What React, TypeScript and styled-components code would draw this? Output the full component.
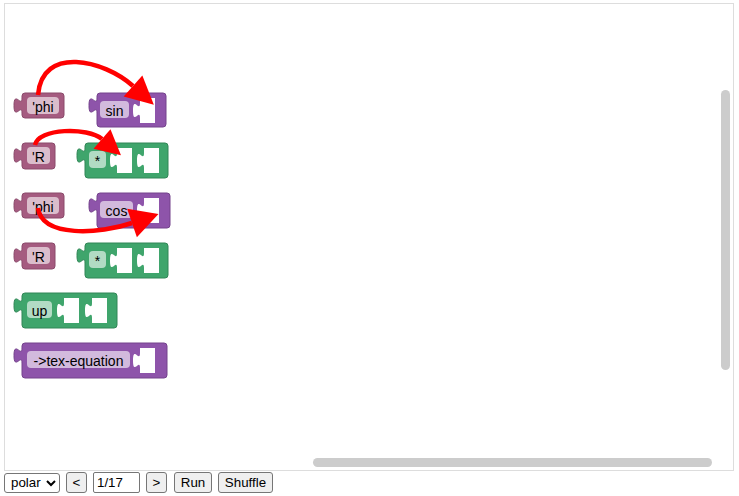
import React from "react";
import styled, { createGlobalStyle } from "styled-components";

const GlobalStyle = createGlobalStyle`
  html, body { margin: 0; padding: 0; background: #ffffff; }
  body { font-family: "Liberation Sans", Arial, sans-serif; }
`;

// workspace inner origin in page coordinates
const OX = 5;
const OY = 4;

const Page = styled.div`
  padding: 3px 0 0 4px;
`;

const Workspace = styled.div`
  position: relative;
  box-sizing: border-box;
  width: 730px;
  height: 468px;
  border: 1px solid #dddddd;
  background: #ffffff;
  overflow: hidden;
`;

const VScroll = styled.div`
  position: absolute;
  left: ${721 - OX}px;
  top: ${90 - OY}px;
  width: 9px;
  height: 280px;
  border-radius: 5px;
  background: #cccccc;
`;

const HScroll = styled.div`
  position: absolute;
  left: ${313 - OX}px;
  top: ${458 - OY}px;
  width: 399px;
  height: 9px;
  border-radius: 5px;
  background: #cccccc;
`;

const BlockSvg = styled.svg.attrs<{ $x: number; $y: number }>((p) => ({
  style: { left: p.$x, top: p.$y },
}))<{ $x: number; $y: number }>`
  position: absolute;
  overflow: visible;
`;

const Overlay = styled.svg`
  position: absolute;
  left: 0;
  top: 0;
  width: 100%;
  height: 100%;
  pointer-events: none;
`;

const Label = styled.text`
  font-family: "Liberation Sans", Arial, sans-serif;
  font-size: 14px;
  fill: #000000;
`;

const Controls = styled.div`
  display: flex;
  align-items: center;
  gap: 6px;
  margin-top: 1px;
  height: 21px;
`;

const Select = styled.select`
  box-sizing: border-box;
  width: 56px;
  height: 20px;
  font: 13.33px "Liberation Sans", Arial, sans-serif;
  color: #000;
  background: #fff;
  border: 1px solid #767676;
  border-radius: 3px;
  padding: 0 0 0 2px;
`;

const Button = styled.button<{ $w: number; $ml?: number }>`
  box-sizing: border-box;
  width: ${(p) => p.$w}px;
  margin-left: ${(p) => p.$ml ?? 0}px;
  height: 21px;
  padding: 1px 0;
  text-align: center;
  font: 13.33px "Liberation Sans", Arial, sans-serif;
  color: #000;
  background: #efefef;
  border: 1px solid #767676;
  border-radius: 3px;
`;

const PageInput = styled.input`
  box-sizing: border-box;
  width: 47px;
  height: 21px;
  padding: 1px 3px;
  font: 13.33px "Liberation Sans", Arial, sans-serif;
  color: #000;
  border: 1px solid #767676;
  border-radius: 2px;
`;

type Kind = "pink" | "purple" | "green";

const COLORS: Record<Kind, { fill: string; dark: string }> = {
  pink: { fill: "#a55b80", dark: "#8b4a6b" },
  purple: { fill: "#8e54aa", dark: "#74428c" },
  green: { fill: "#3fa56c", dark: "#318656" },
};

interface BlockDef {
  x: number;
  y: number;
  w: number;
  h: number;
  kind: Kind;
  label: string;
  pillX: number;
  pillW: number;
  slots: number[];
}

const BLOCKS: BlockDef[] = [
  { x: 22, y: 93, w: 42, h: 25, kind: "pink", label: "'phi", pillX: 27, pillW: 32, slots: [] },
  { x: 97, y: 93, w: 69, h: 34, kind: "purple", label: "sin", pillX: 100, pillW: 29, slots: [133] },
  { x: 22, y: 143, w: 33, h: 26, kind: "pink", label: "'R", pillX: 27, pillW: 23, slots: [] },
  { x: 85, y: 143, w: 83, h: 35, kind: "green", label: "*", pillX: 89, pillW: 17, slots: [110, 137] },
  { x: 22, y: 193, w: 42, h: 25, kind: "pink", label: "'phi", pillX: 27, pillW: 32, slots: [] },
  { x: 97, y: 193, w: 73, h: 35, kind: "purple", label: "cos", pillX: 100, pillW: 33, slots: [137] },
  { x: 22, y: 243, w: 33, h: 26, kind: "pink", label: "'R", pillX: 27, pillW: 23, slots: [] },
  { x: 85, y: 243, w: 83, h: 35, kind: "green", label: "*", pillX: 89, pillW: 17, slots: [110, 137] },
  { x: 22, y: 293, w: 95, h: 35, kind: "green", label: "up", pillX: 27, pillW: 25, slots: [57, 85] },
  { x: 22, y: 343, w: 145, h: 35, kind: "purple", label: "->tex-equation", pillX: 27, pillW: 103, slots: [133] },
];

const TAB = 8;

function bodyPath(w: number, h: number) {
  const r = 3;
  const L = TAB;
  return [
    `M ${L + r},0`,
    `H ${L + w - r}`,
    `Q ${L + w},0 ${L + w},${r}`,
    `V ${h - r}`,
    `Q ${L + w},${h} ${L + w - r},${h}`,
    `H ${L + r}`,
    `Q ${L},${h} ${L},${h - r}`,
    `V 20`,
    `c 0,-10 -8,8 -8,-7.5 s 8,2.5 8,-7.5`,
    `V ${r}`,
    `Q ${L},0 ${L + r},0 Z`,
  ].join(" ");
}

function slotPath(sx: number, sy: number, sh: number) {
  const k = 7;
  return [
    `M ${sx + k},${sy}`,
    `H ${sx + 22}`,
    `V ${sy + sh}`,
    `H ${sx + k}`,
    `V ${sy + 20}`,
    `c 0,-10 -${k},8 -${k},-7.5 s ${k},2.5 ${k},-7.5 Z`,
  ].join(" ");
}

const Block: React.FC<{ def: BlockDef }> = ({ def }) => {
  const c = COLORS[def.kind];
  const tall = def.h > 30;
  const pillY = tall ? 8 : 4;
  const px = def.pillX - def.x + TAB;
  return (
    <BlockSvg
      $x={def.x - TAB - OX}
      $y={def.y - OY}
      width={def.w + TAB + 1}
      height={def.h + 1}
      viewBox={`0 0 ${def.w + TAB + 1} ${def.h + 1}`}
    >
      <path d={bodyPath(def.w, def.h)} fill={c.fill} stroke={c.dark} strokeWidth={1} />
      <rect x={px} y={pillY} width={def.pillW} height={17} rx={4} fill="rgba(255,255,255,0.6)" />
      <Label x={px + def.pillW / 2} y={pillY + 9.5} textAnchor="middle" dominantBaseline="central">
        {def.label}
      </Label>
      {def.slots.map((s, i) => (
        <path key={i} d={slotPath(s - def.x + TAB, 5, 25)} fill="#ffffff" />
      ))}
    </BlockSvg>
  );
};

type P = [number, number];

function makeArrow(p0: P, c1: P, c2: P, p3: P, L = 24, W = 24) {
  const loc = (p: P): P => [p[0] - OX, p[1] - OY];
  const [a, b, cc, d] = [loc(p0), loc(c1), loc(c2), loc(p3)];
  const dx = d[0] - cc[0];
  const dy = d[1] - cc[1];
  const len = Math.hypot(dx, dy);
  const ux = dx / len;
  const uy = dy / len;
  const tip: P = [d[0] + ux * L, d[1] + uy * L];
  const b1: P = [d[0] - uy * (W / 2), d[1] + ux * (W / 2)];
  const b2: P = [d[0] + uy * (W / 2), d[1] - ux * (W / 2)];
  return {
    line: `M ${a[0]},${a[1]} C ${b[0]},${b[1]} ${cc[0]},${cc[1]} ${d[0]},${d[1]}`,
    head: `${tip[0]},${tip[1]} ${b1[0]},${b1[1]} ${b2[0]},${b2[1]}`,
  };
}

const ARROWS = [
  makeArrow([38, 95], [42, 45], [104, 60], [133, 86], 28, 28),
  makeArrow([35, 145], [38, 128], [88, 127], [102, 139], 25, 26),
  makeArrow([38, 208], [42, 238], [100, 234], [132, 223], 28, 30),
];

export default function App() {
  return (
    <Page>
      <GlobalStyle />
      <Workspace>
        {BLOCKS.map((b, i) => (
          <Block key={i} def={b} />
        ))}
        <Overlay>
          {ARROWS.map((a, i) => (
            <g key={i}>
              <path d={a.line} fill="none" stroke="#ff0000" strokeWidth={4.5} />
              <polygon points={a.head} fill="#ff0000" />
            </g>
          ))}
        </Overlay>
        <VScroll />
        <HScroll />
      </Workspace>
      <Controls>
        <Select defaultValue="polar">
          <option value="polar">polar</option>
        </Select>
        <Button $w={21}>&lt;</Button>
        <PageInput defaultValue="1/17" />
        <Button $w={21}>&gt;</Button>
        <Button $w={38} $ml={1}>Run</Button>
        <Button $w={55}>Shuffle</Button>
      </Controls>
    </Page>
  );
}
